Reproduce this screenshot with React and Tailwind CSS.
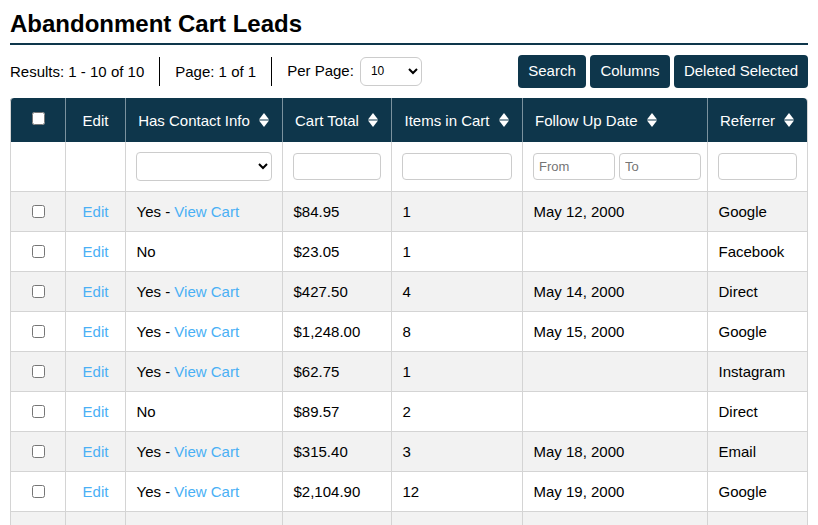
const rows = [
  ["Yes", "$84.95", "1", "May 12, 2000", "Google"],
  ["No", "$23.05", "1", "", "Facebook"],
  ["Yes", "$427.50", "4", "May 14, 2000", "Direct"],
  ["Yes", "$1,248.00", "8", "May 15, 2000", "Google"],
  ["Yes", "$62.75", "1", "", "Instagram"],
  ["No", "$89.57", "2", "", "Direct"],
  ["Yes", "$315.40", "3", "May 18, 2000", "Email"],
  ["Yes", "$2,104.90", "12", "May 19, 2000", "Google"],
  ["No", "$45.00", "1", "", "Direct"],
  ["Yes", "$150.25", "2", "May 21, 2000", "Google"],
];

function Sort() {
  return (
    <svg width="10" height="14" viewBox="0 0 10 14" className="inline-block ml-[9px] align-[-1px]" fill="#fff">
      <path d="M5 0 L10 6.5 H0 Z" />
      <path d="M0 7.5 H10 L5 14 Z" />
    </svg>
  );
}

const input = "h-[27px] border border-[#ccc] rounded bg-white px-[5px] text-[13px] outline-none placeholder:text-[#757575]";
const btn = "h-[33px] bg-[#0e364b] text-white rounded text-[15px] text-center";
const th = "border-l border-[#7b929e] font-normal text-white text-center h-[44px] p-0 pt-[2px]";
const td = "border-l border-[#d4d4d4] border-t h-[40px] px-[10.5px] py-0 pt-[2px]";
const fd = "border-l border-[#d4d4d4] h-[49px] px-[10px] py-0";

export default function App() {
  return (
    <div className="h-screen overflow-hidden bg-white px-[10px] text-[15px] text-black font-['Liberation_Sans',Arial,sans-serif]">
      <h1 className="text-[24px] leading-[28px] font-bold pt-[10px] h-[43px]">Abandonment Cart Leads</h1>
      <div className="h-[2px] bg-[#0e364b]" />
      <div className="flex items-center h-[33px] mt-[10px] justify-between">
        <div className="flex items-center">
          <span className="pr-[15px] mt-[1px]">Results: 1 - 10 of 10</span>
          <span className="w-px h-[29px] bg-black" />
          <span className="px-[15px] mt-[1px]">Page: 1 of 1</span>
          <span className="w-px h-[29px] bg-black" />
          <span className="pl-[15px] -mt-[1px]">Per Page:</span>
          <select className="ml-[6px] w-[62px] h-[29px] border border-[#ccc] rounded-md bg-white text-[12px] pl-[6px] -mt-[1px]">
            <option>10</option>
          </select>
        </div>
        <div className="flex gap-[4px]">
          <button className={btn + " w-[68px]"}>Search</button>
          <button className={btn + " w-[80px]"}>Columns</button>
          <button className={btn + " w-[134px]"}>Deleted Selected</button>
        </div>
      </div>
      <table className="mt-[10px] w-[798px] table-fixed border-separate border-spacing-0 border-r border-b border-[#d4d4d4] rounded-t">
        <colgroup>
          <col className="w-[55px]" />
          <col className="w-[60px]" />
          <col className="w-[157px]" />
          <col className="w-[109px]" />
          <col className="w-[131px]" />
          <col className="w-[185px]" />
          <col className="w-[100px]" />
        </colgroup>
        <thead>
          <tr className="bg-[#0e364b]">
            <th className={th + " border-l-[#d4d4d4] rounded-tl"}>
              <input type="checkbox" className="align-[1px]" />
            </th>
            <th className={th}>Edit</th>
            <th className={th + " pr-[1px]"}>Has Contact Info<Sort /></th>
            <th className={th + " pr-[1px]"}>Cart Total<Sort /></th>
            <th className={th + " pr-[1px]"}>Items in Cart<Sort /></th>
            <th className={th + " text-left pl-[12px]"}>Follow Up Date<Sort /></th>
            <th className={th + " pr-[1px] rounded-tr"}>Referrer<Sort /></th>
          </tr>
          <tr>
            <td className={fd} />
            <td className={fd} />
            <td className={fd}>
              <select className="w-[136px] h-[29px] border border-[#ccc] rounded bg-white block">
                <option></option>
              </select>
            </td>
            <td className={fd}>
              <input className={input + " w-[88px] block"} />
            </td>
            <td className={fd}>
              <input className={input + " w-[110px] block"} />
            </td>
            <td className={fd}>
              <div className="flex gap-[4px]">
                <input placeholder="From" className={input + " w-[82px]"} />
                <input placeholder="To" className={input + " w-[82px]"} />
              </div>
            </td>
            <td className={fd}>
              <input className={input + " w-[79px] block"} />
            </td>
          </tr>
        </thead>
        <tbody>
          {rows.map((r, i) => (
            <tr key={i} className={i % 2 === 0 ? "bg-[#f2f2f2]" : "bg-white"}>
              <td className={td + " text-center px-0"}>
                <input type="checkbox" className="align-[-1px]" />
              </td>
              <td className={td + " text-center px-0 text-[#4ab0f5]"}>Edit</td>
              <td className={td}>
                {r[0]}
                {r[0] === "Yes" && (
                  <>
                    {" - "}
                    <a className="text-[#4ab0f5]">View Cart</a>
                  </>
                )}
              </td>
              <td className={td}>{r[1]}</td>
              <td className={td}>{r[2]}</td>
              <td className={td}>{r[3]}</td>
              <td className={td}>{r[4]}</td>
            </tr>
          ))}
        </tbody>
      </table>
    </div>
  );
}
